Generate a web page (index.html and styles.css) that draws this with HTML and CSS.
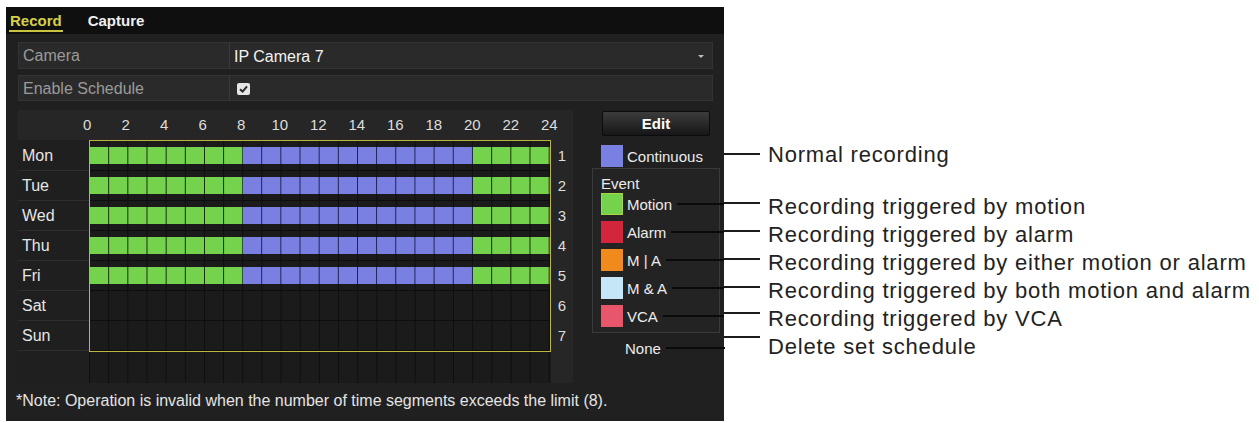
FILE: index.html
```html
<!DOCTYPE html>
<html lang="en">
<head>
    <meta charset="UTF-8">
    <meta name="viewport" content="width=device-width, initial-scale=1.0">
    <title>Record Schedule</title>
    <link rel="stylesheet" href="styles.css">
</head>
<body>
    <div class="page">
        <div class="panel">
            <div class="tabs">
                <span class="tab active">Record</span>
                <span class="tab">Capture</span>
            </div>

            <div class="field">
                <div class="field-label">Camera</div>
                <div class="field-value">IP Camera 7<span class="arrow"></span></div>
            </div>
            <div class="field">
                <div class="field-label">Enable Schedule</div>
                <div class="field-value">
                    <svg class="check" width="13" height="12" viewBox="0 0 13 12">
                        <rect x="0" y="0" width="13" height="12" rx="2" fill="#e6e6e6"/>
                        <path d="M3 6.2 L5.6 8.6 L10 3.4" fill="none" stroke="#2a2a2a" stroke-width="2"/>
                    </svg>
                </div>
            </div>

            <div class="main">
                <div class="schedule">
                    <div class="hours">
                        <span>0</span><span>2</span><span>4</span><span>6</span><span>8</span>
                        <span>10</span><span>12</span><span>14</span><span>16</span><span>18</span>
                        <span>20</span><span>22</span><span>24</span>
                    </div>
                    <div class="days">
                        <div>Mon</div><div>Tue</div><div>Wed</div><div>Thu</div>
                        <div>Fri</div><div>Sat</div><div>Sun</div>
                    </div>
                    <div class="chart">
                        <div class="day"><span class="seg motion s8"></span><span class="seg cont s12"></span><span class="seg motion s4"></span></div>
                        <div class="day"><span class="seg motion s8"></span><span class="seg cont s12"></span><span class="seg motion s4"></span></div>
                        <div class="day"><span class="seg motion s8"></span><span class="seg cont s12"></span><span class="seg motion s4"></span></div>
                        <div class="day"><span class="seg motion s8"></span><span class="seg cont s12"></span><span class="seg motion s4"></span></div>
                        <div class="day"><span class="seg motion s8"></span><span class="seg cont s12"></span><span class="seg motion s4"></span></div>
                        <div class="day"></div>
                        <div class="day"></div>
                    </div>
                    <div class="nums">
                        <div>1</div><div>2</div><div>3</div><div>4</div>
                        <div>5</div><div>6</div><div>7</div>
                    </div>
                    <div class="days-fill"></div>
                    <div class="chart-fill"></div>
                </div>

                <div class="legend">
                    <button class="edit">Edit</button>
                    <div class="item first"><span class="swatch cont"></span>Continuous</div>
                    <div class="event">
                        <div class="event-title">Event</div>
                        <div class="item lead"><span class="swatch motion"></span>Motion</div>
                        <div class="item lead"><span class="swatch alarm"></span>Alarm</div>
                        <div class="item lead"><span class="swatch either"></span>M | A</div>
                        <div class="item lead"><span class="swatch both"></span>M &amp; A</div>
                        <div class="item lead"><span class="swatch vca"></span>VCA</div>
                    </div>
                    <div class="item none lead">None</div>
                </div>
            </div>

            <div class="note">*Note: Operation is invalid when the number of time segments exceeds the limit (8).</div>
        </div>

        <div class="notes">
            <div class="ann first">Normal recording</div>
            <div class="ann second">Recording triggered by motion</div>
            <div class="ann">Recording triggered by alarm</div>
            <div class="ann">Recording triggered by either motion or alarm</div>
            <div class="ann">Recording triggered by both motion and alarm</div>
            <div class="ann vca">Recording triggered by VCA</div>
            <div class="ann last">Delete set schedule</div>
        </div>
    </div>
</body>
</html>
```

FILE: styles.css
```css
body {
    margin: 0;
    background: #fff;
    font-family: "Liberation Sans", Arial, sans-serif;
}

.page {
    display: flex;
    align-items: flex-start;
    padding: 7px 0 0 6px;
}

/* dark dvr panel */
.panel {
    width: 718px;
    height: 414px;
    background: #202020;
    color: #e6e6e6;
    font-size: 16px;
}

.tabs {
    display: flex;
    gap: 24px;
    height: 27px;
    padding-left: 3px;
    background: #0f0f0f;
}

.tab {
    padding: 5px 1px 0;
    line-height: 18px;
    font-size: 15px;
    font-weight: bold;
    color: #f0f0f0;
    border-bottom: 2px solid transparent;
    align-self: flex-start;
}

.tab.active {
    color: #d6cf48;
    border-bottom-color: #cbc43e;
}

.field {
    display: flex;
    box-sizing: border-box;
    width: 695px;
    height: 27px;
    margin: 8px 0 0 12px;
    background: #2a2a2a;
    border: 1px solid #333;
}

.field + .field {
    height: 26px;
    margin-top: 6px;
}

.field-label {
    width: 206px;
    padding: 2px 0 0 4px;
    line-height: 22px;
    color: #9a9a9a;
    border-right: 1px solid #3a3a3a;
}

.field-value {
    flex: 1;
    display: flex;
    align-items: center;
    justify-content: space-between;
    padding: 2px 8px 0 4px;
    color: #f2f2f2;
}

.arrow {
    width: 0;
    height: 0;
    border-left: 3px solid transparent;
    border-right: 3px solid transparent;
    border-top: 3px solid #bdbdbd;
}

.check {
    margin-left: 3px;
}

.main {
    display: flex;
    gap: 19px;
    margin-top: 9px;
    padding-left: 12px;
}

/* schedule grid */
.schedule {
    display: grid;
    grid-template-columns: 71px 462px 22px;
    grid-template-rows: 30px 212px 31px;
    background: #262626;
}

.hours {
    grid-column: 1 / -1;
    display: flex;
    padding-left: 50px;
    font-size: 15px;
    line-height: 30px;
    color: #dedede;
}

.hours span {
    width: 38.5px;
    text-align: center;
}

.days {
    padding-top: 1px;
    background: #1f1f1f;
}

.days div {
    height: 29px;
    line-height: 29px;
    padding-left: 4px;
    border-bottom: 1px solid #2e2e2e;
}

.chart,
.chart-fill {
    background-color: #1b1b1b;
    background-image: linear-gradient(to right, transparent 18.17px, #0e0e0e 18.17px);
    background-size: 19.1667px 100%;
}

.chart {
    border: 1px solid #bdb742;
}

.chart-fill {
    grid-column: 2;
    background-position: 1px 0;
}

.days-fill {
    background: #1f1f1f;
}

.day {
    display: flex;
    box-sizing: border-box;
    height: 30px;
    padding-top: 6px;
    border-bottom: 1px solid #0e0e0e;
}

.seg {
    height: 17px;
    background-size: 19.1667px 100%;
}

.seg.motion {
    background-image: linear-gradient(to right, #74d24c 18.17px, #14280c 18.17px);
}

.seg.cont {
    background-image: linear-gradient(to right, #7a80e2 18.17px, #1c1f4a 18.17px);
}

.s8 { width: 33.3333%; }
.s12 { width: 50%; }
.s4 { width: 16.6667%; }

.nums {
    padding-top: 1px;
    font-size: 15px;
    color: #dedede;
}

.nums div {
    height: 30px;
    line-height: 30px;
    text-align: center;
}

/* legend column */
.legend {
    display: flex;
    flex-direction: column;
    width: 128px;
    font-size: 15px;
    color: #ececec;
}

.edit {
    width: 108px;
    height: 25px;
    margin: 1px 0 0 10px;
    padding: 0;
    border: 1px solid #0c0c0c;
    border-radius: 2px;
    background: linear-gradient(#3c3c3c, #161616);
    color: #fff;
    font: bold 15px "Liberation Sans", Arial, sans-serif;
}

.item {
    display: flex;
    align-items: center;
    height: 22px;
}

.item.first {
    margin-top: 9px;
    padding-left: 9px;
}

.lead::after {
    content: "";
    flex: 1;
    height: 2px;
    margin: 0 -5px 0 5px;
    background: #0a0a0a;
}

.swatch {
    width: 22px;
    height: 22px;
    margin-right: 4px;
}

.swatch.cont { background: #7a80e2; }
.swatch.motion { background: #74d24c; box-shadow: inset 0 0 0 1px #a8d840; }
.swatch.alarm { background: #d3263c; }
.swatch.either { background: #f08a1c; }
.swatch.both { background: #c4e6f6; }
.swatch.vca { background: #e8566c; }

.event {
    margin-top: 1px;
    padding: 7px 0 5px 8px;
    background: #232323;
    border: 1px solid #3a3a3a;
}

.event-title {
    line-height: 16px;
    margin-bottom: 1px;
}

.event .item + .item {
    margin-top: 6px;
}

.item.none {
    margin-top: 4px;
    padding-left: 33px;
}

.note {
    margin: 8px 0 0 10px;
    font-size: 16px;
    line-height: 20px;
    color: #e4e4e4;
}

/* callouts on the white side */
.notes {
    padding-top: 134px;
    font-size: 22px;
    letter-spacing: 0.8px;
    color: #222;
}

.ann {
    display: flex;
    align-items: flex-start;
    height: 28px;
    line-height: 28px;
    white-space: nowrap;
}

.ann::before {
    content: "";
    flex: none;
    width: 36px;
    height: 2px;
    margin: 9px 8px 0 0;
    background: #1c1c1c;
}

.ann.first::before { margin-top: 12px; }
.ann.second { margin-top: 24px; }
.ann.vca::before { margin-top: 7px; }
.ann.last::before { margin-top: 3px; }
```
